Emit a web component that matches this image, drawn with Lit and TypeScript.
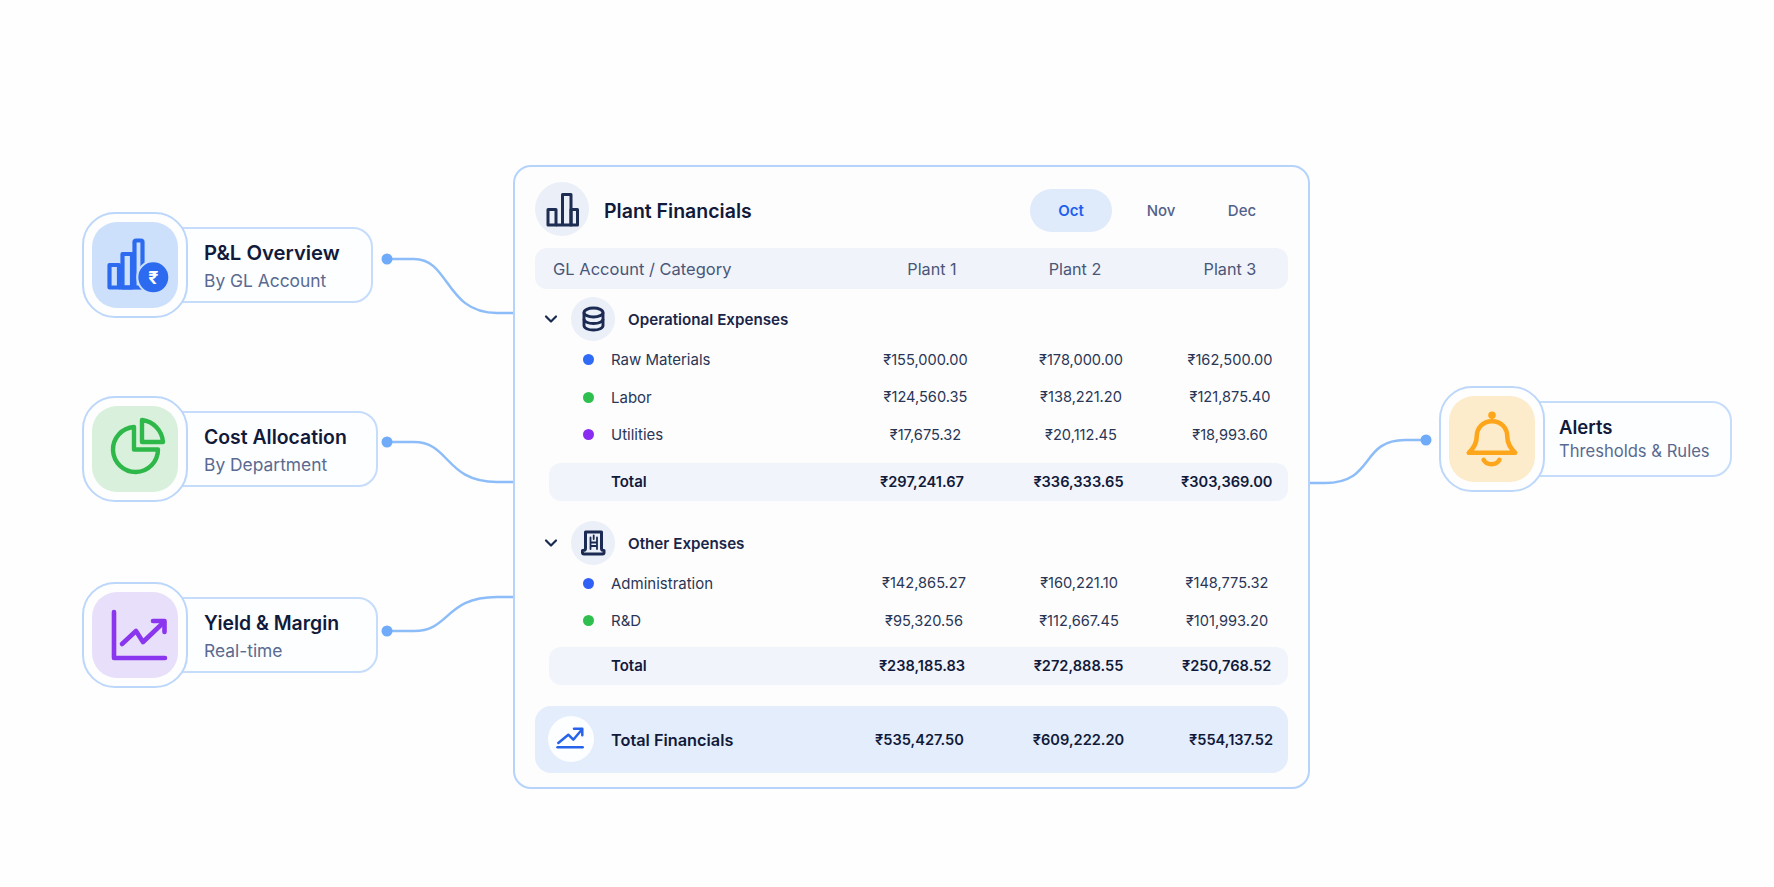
import { LitElement, html, css, svg } from "lit";
import { customElement } from "lit/decorators.js";

type Row = { dot?: string; label: string; values: string[] };

const groupA: Row[] = [
  { dot: "#2f6bf5", label: "Raw Materials", values: ["₹155,000.00", "₹178,000.00", "₹162,500.00"] },
  { dot: "#2fbf4f", label: "Labor", values: ["₹124,560.35", "₹138,221.20", "₹121,875.40"] },
  { dot: "#8a2df0", label: "Utilities", values: ["₹17,675.32", "₹20,112.45", "₹18,993.60"] },
];
const groupB: Row[] = [
  { dot: "#3060f6", label: "Administration", values: ["₹142,865.27", "₹160,221.10", "₹148,775.32"] },
  { dot: "#2fbf4f", label: "R&D", values: ["₹95,320.56", "₹112,667.45", "₹101,993.20"] },
];

const plIcon = svg`<svg viewBox="0 0 86 86" width="86" height="86" fill="none" stroke="#2c6bf0" stroke-width="4.200" stroke-linejoin="round">
  <path d="M17.500 43H27V65.500H17.500Z"/><path d="M30.500 32H40V65.500H30.500Z"/><path d="M27 65.500H52"/><path d="M42.500 65V20Q42.500 18.500 44 18.500H49Q50.500 18.500 50.500 20V48"/>
  <circle cx="61.300" cy="55.300" r="16" fill="#2c6bf0" stroke="#cde0fb" stroke-width="2"/>
  <text x="61.300" y="61.800" text-anchor="middle" font-family="Inter, sans-serif" font-size="18" font-weight="700" fill="#fff" stroke="none">₹</text>
</svg>`;
const pieIcon = svg`<svg viewBox="0 0 86 86" width="86" height="86" fill="none" stroke="#2fb84a" stroke-width="4.400" stroke-linejoin="round">
  <path d="M42 21V43.500H66A22.500 22.500 0 1 1 42 21Z"/><path d="M50 14A24 24 0 0 1 71 36H50Z"/>
</svg>`;
const trendIcon = svg`<svg viewBox="0 0 86 86" width="86" height="86" fill="none" stroke="#8a35ee" stroke-width="4.600" stroke-linecap="round" stroke-linejoin="round">
  <path d="M22 20V66H73"/><path d="M30 52L44 39L51 50L72 30"/><path d="M61 29H72.500V40"/>
</svg>`;
const bellIcon = svg`<svg viewBox="0 0 87 87" width="87" height="87" fill="none" stroke="#fda61c" stroke-width="4.600" stroke-linecap="round" stroke-linejoin="round">
  <path d="M43.500 25C34 25 28 32 28 41C28 48 25 52 20 57H67C62 52 59 48 59 41C59 32 53 25 43.500 25Z"/>
  <circle cx="43.500" cy="19" r="3.800" fill="#fda61c" stroke="none"/>
  <path d="M35 64C38 70 48 70 51 64"/>
</svg>`;
const barsIcon = svg`<svg viewBox="0 0 54 54" width="54" height="54" fill="none" stroke="#1e2d52" stroke-width="3" stroke-linejoin="round">
  <path d="M13 27.500H21V43H13Z"/><path d="M21 43H27.500M27.500 12.500H36V43H27.500Z"/><path d="M36 27.500H42.500V43H36Z"/>
</svg>`;
const dbIcon = svg`<svg viewBox="0 0 44 44" width="44" height="44" fill="none" stroke="#1b2a52" stroke-width="2.900">
  <ellipse cx="22.500" cy="15.500" rx="9.500" ry="4.500"/>
  <path d="M13 15.500V28.500C13 31 17 33 22.500 33S32 31 32 28.500V15.500"/>
  <path d="M13 22C13 24.500 17 26.500 22.500 26.500S32 24.500 32 22"/>
</svg>`;
const ledgerIcon = svg`<svg viewBox="0 0 44 44" width="44" height="44" fill="none" stroke="#1b2a52" stroke-width="3" stroke-linejoin="round" stroke-linecap="round">
  <path d="M14.500 11H30.500V27.500Q30.500 29.500 33 29.500V31.500Q33 33 31.500 33H13Q11.500 33 11.500 31.500V29.500Q14.500 29.500 14.500 27.500Z"/>
  <path d="M19.500 16.500V28M26 16.500V28M19.500 21.500H26M19.500 25H26M22.700 14.500V18" stroke-width="1.800"/>
</svg>`;
const footIcon = svg`<svg viewBox="0 0 46 46" width="46" height="46" fill="none" stroke="#2663ea" stroke-width="2.500" stroke-linecap="round" stroke-linejoin="round">
  <path d="M10.300 27L20.300 18.700L25.300 23.700L33.700 13.700"/><path d="M26 12.700H34.300V19.300"/><path d="M9.500 31.300H34.700"/>
</svg>`;

@customElement("app-root")
export class AppRoot extends LitElement {
  static styles = css`
    :host { display: block; width: 1774px; height: 887px; background: #fefefe; font-family: Inter, "Noto Sans", sans-serif; color: #111a3a; overflow: hidden; }
    .stage { position: relative; width: 1774px; height: 887px; display: grid; grid-template-columns: 431px 797px 1fr; padding: 165px 0 0 82px; box-sizing: border-box; align-items: start; }
    .wires { position: absolute; inset: 0; pointer-events: none; }
    .left { display: flex; flex-direction: column; gap: 78px; margin-top: 47px; }
    .left .node:last-child { margin-top: 2px; }
    .right { margin: 221px 0 0 129px; }
    .node { display: flex; align-items: center; height: 106px; position: relative; }
    .tile { width: 106px; height: 106px; box-sizing: border-box; border: 2.800px solid #bcd7fa; border-radius: 33px; background: #fefeff; display: flex; align-items: center; justify-content: center; flex: none; position: relative; z-index: 1; }
    .tile-in { width: 86px; height: 86px; border-radius: 25px; display: flex; flex: none; }
    .tile-in.blue { background: #cde0fb; }
    .tile-in.green { background: #d9f0dc; }
    .tile-in.purple { background: #e8dffa; }
    .tile-in.orange { background: #fdeccb; }
    .pill { height: 76px; box-sizing: border-box; margin-left: -12px; padding: 4px 0 0 26px; border: 2px solid #c6dcfb; border-radius: 0 20px 20px 0; background: #fdfeff; display: flex; flex-direction: column; justify-content: center; gap: 4px; }
    .pill b { font-size: 19.400px; line-height: 24px; font-weight: 600; color: #111a3a; }
    .pill span { font-size: 17.400px; line-height: 24px; color: #5a6a90; }
    .w1 { width: 197px; } .w2 { width: 202px; } .w3 { width: 202px; }
    .w1 b { font-size: 20.300px; }
    .w4 { width: 199px; padding: 0 0 0 24px; gap: 0; }
    .w4 b { font-size: 18.500px; }
    .w4 span { font-size: 16.600px; }

    .panel { position: relative; width: 797px; height: 624px; box-sizing: border-box; border: 2px solid #b5d3fb; border-radius: 18px; background: #fdfdfe; padding: 14px 20px 0; }
    .head { display: flex; align-items: center; height: 55px; }
    .disc { border-radius: 50%; background: #eaeff8; display: flex; flex: none; }
    .d54 { width: 54px; height: 54px; }
    .d44 { width: 44px; height: 44px; }
    .d46 { width: 46px; height: 46px; background: #fdfeff; }
    .head h1 { margin: 5px 0 0 15px; font-size: 19.500px; font-weight: 600; color: #111a3a; }
    .tabs { display: grid; grid-template-columns: 82px 82px 64px; gap: 8px; margin: 3px 14px 0 auto; }
    .tab { height: 43px; border-radius: 22px; font-size: 15px; display: flex; align-items: center; justify-content: center; color: #54628a; font-weight: 500; }
    .tab.on { background: #dfeafb; color: #1b5ff0; font-weight: 600; }

    .cols { display: grid; grid-template-columns: 326px 129px 182px 116px; align-items: center; }
    .cols > .num { text-align: center; font-size: 14.600px; }
    .thead { height: 41px; margin-top: 12px; border-radius: 12px; background: #f0f3fa; font-size: 16.500px; color: #4a5678; grid-template-columns: 351px 92px 194px 116px; }
    .cols.thead > .num { font-size: 16.200px; }
    .thead .first { padding-left: 18px; }
    .group { display: flex; align-items: center; height: 44px; }
    .group.a { margin-top: 8px; }
    .group.b { margin-top: 20px; }
    .group.b strong { padding-top: 2px; }
    .group svg.chev { width: 14px; height: 10px; margin: 0 13px 0 9px; }
    .group strong { margin-left: 13px; font-size: 15.200px; font-weight: 600; color: #1a2548; }
    .row { height: 37.500px; font-size: 15px; color: #2a3655; }
    .row.b { grid-template-columns: 321px 136px 174px 122px; }
    .row .first { display: flex; align-items: center; padding-left: 48px; }
    .dot { width: 11px; height: 11px; border-radius: 50%; margin-right: 17px; }
    .total { height: 38px; margin-left: 14px; grid-template-columns: 303.500px 139px 174px 122.500px; border-radius: 12px; background: #f1f4fa; font-size: 15px; font-weight: 600; color: #111a3a; }
    .total .first { padding-left: 62px; }
    .t1 { margin-top: 9px; }
    .t2 { margin-top: 7px; }
    .foot { height: 67px; margin-top: 21px; border-radius: 16px; background: #e3edfb; font-size: 16.300px; font-weight: 600; color: #111a3a; grid-template-columns: 321px 127px 191px 114px; }
    .cols.foot > .num { font-size: 14.600px; padding-top: 2px; }
    .foot .first { display: flex; align-items: center; gap: 17px; padding-left: 13px; }
    .foot .first span { padding-top: 2px; }
  `;

  private node(icon: unknown, tone: string, title: string, sub: string, w: string) {
    return html`<div class="node">
      <div class="tile"><div class="tile-in ${tone}">${icon}</div></div>
      <div class="pill ${w}"><b>${title}</b><span>${sub}</span></div>
    </div>`;
  }

  private rows(list: Row[], cls: string) {
    return list.map(
      (r) => html`<div class="cols row ${cls}">
        <div class="first"><i class="dot" style="background:${r.dot}"></i>${r.label}</div>
        ${r.values.map((v) => html`<div class="num">${v}</div>`)}
      </div>`
    );
  }

  private total(cls: string, values: string[]) {
    return html`<div class="cols total ${cls}"><div class="first">Total</div>${values.map((v) => html`<div class="num">${v}</div>`)}</div>`;
  }

  private group(cls: string, icon: unknown, label: string) {
    return html`<div class="group ${cls}">
      <svg class="chev" viewBox="0 0 14 10" fill="none" stroke="#1b2a52" stroke-width="2.200" stroke-linecap="round" stroke-linejoin="round"><path d="M2 2.500L7 7.500L12 2.500"/></svg>
      <div class="disc d44">${icon}</div><strong>${label}</strong>
    </div>`;
  }

  render() {
    return html`<div class="stage">
      <div class="left">
        ${this.node(plIcon, "blue", "P&L Overview", "By GL Account", "w1")}
        ${this.node(pieIcon, "green", "Cost Allocation", "By Department", "w2")}
        ${this.node(trendIcon, "purple", "Yield & Margin", "Real-time", "w3")}
      </div>
      <div class="panel">
        <div class="head">
          <div class="disc d54">${barsIcon}</div>
          <h1>Plant Financials</h1>
          <div class="tabs"><div class="tab on">Oct</div><div class="tab">Nov</div><div class="tab">Dec</div></div>
        </div>
        <div class="cols thead"><div class="first">GL Account / Category</div><div class="num">Plant 1</div><div class="num">Plant 2</div><div class="num">Plant 3</div></div>
        ${this.group("a", dbIcon, "Operational Expenses")}
        ${this.rows(groupA, "a")}
        ${this.total("t1", ["₹297,241.67", "₹336,333.65", "₹303,369.00"])}
        ${this.group("b", ledgerIcon, "Other Expenses")}
        ${this.rows(groupB, "b")}
        ${this.total("t2", ["₹238,185.83", "₹272,888.55", "₹250,768.52"])}
        <div class="cols foot">
          <div class="first"><div class="disc d46">${footIcon}</div><span>Total Financials</span></div>
          <div class="num">₹535,427.50</div><div class="num">₹609,222.20</div><div class="num">₹554,137.52</div>
        </div>
      </div>
      <div class="right">
        ${this.node(bellIcon, "orange", "Alerts", "Thresholds & Rules", "w4")}
      </div>
      <svg class="wires" viewBox="0 0 1774 887" fill="none" stroke="#8dbdf8" stroke-width="2.500">
        <path d="M387 259H414C450 259 445 313 497 313H513"/>
        <path d="M387 442H414C450 442 445 482 497 482H513"/>
        <path d="M387 631H414C450 631 445 597 497 597H513"/>
        <path d="M1310 483H1325C1375 483 1360 440 1405 440H1426"/>
        <g fill="#6fabf9" stroke="none">
          <circle cx="387" cy="259" r="5.500"/><circle cx="387" cy="442" r="5.500"/><circle cx="387" cy="631" r="5.500"/><circle cx="1426" cy="440" r="5.500"/>
        </g>
      </svg>
    </div>`;
  }
}
